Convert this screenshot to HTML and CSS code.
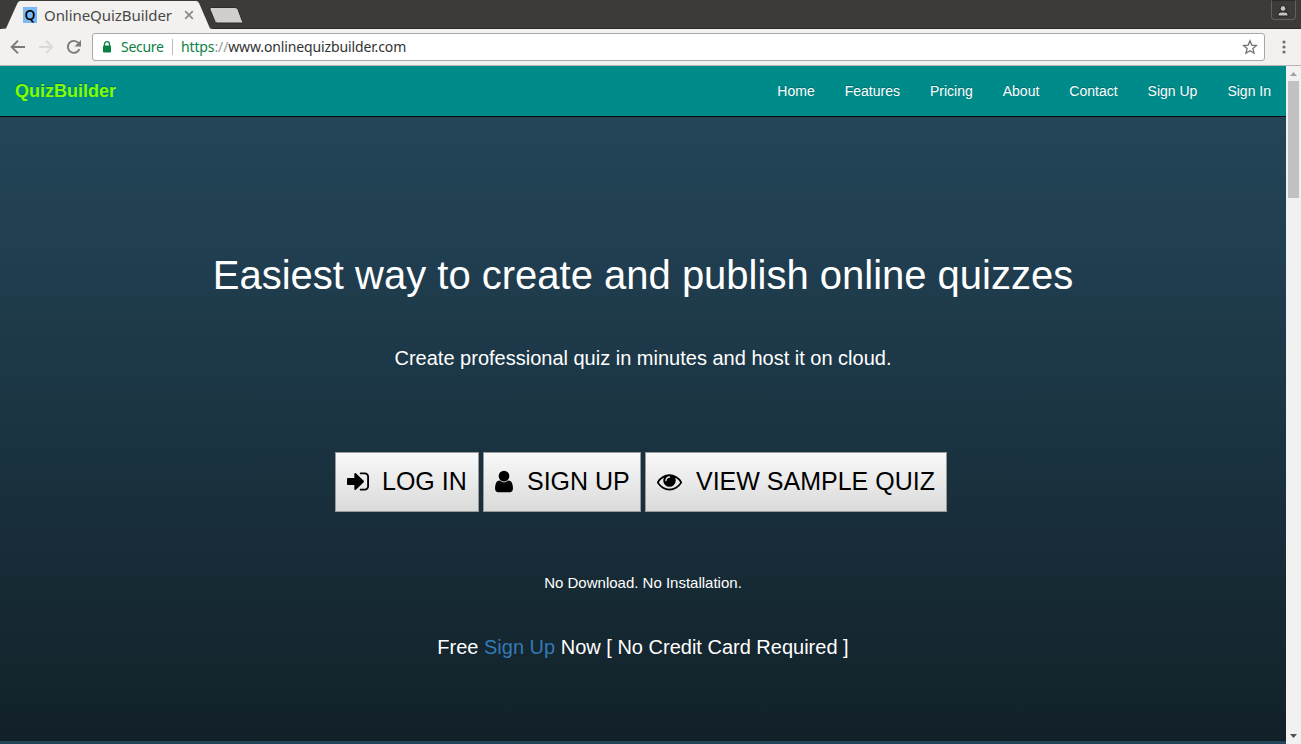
FILE: index.html
```html
<!DOCTYPE html>
<html lang="en">
<head>
    <meta charset="UTF-8">
    <meta name="viewport" content="width=device-width, initial-scale=1.0">
    <title>OnlineQuizBuilder</title>
    <link rel="stylesheet" href="styles.css">
</head>
<body>
    <div class="tab-strip">
        <svg class="tab-shapes" width="250" height="29" viewBox="0 0 250 29">
            <path d="M0 29L6 28.5 17.500 3Q18.500 1 20.500 1H196Q198 1 199 3L210 28.5 213 29z" fill="#f2f1f0"/>
            <path d="M211 7.500h24q2 0 3 2l4.500 12q.5 1.500-1 1.500h-24q-2 0-2.500-1.500l-5-12q-.5-2 1-2z" fill="#d0cfcd" stroke="#2b2a27"/>
        </svg>
        <div class="tab">
            <span class="favicon">Q</span>
            <span class="tab-title">OnlineQuizBuilder</span>
            <svg width="10" height="10" viewBox="0 0 10 10"><path d="M1.200 1.200l7.600 7.600M8.800 1.200L1.200 8.800" stroke="#8b8a88" stroke-width="1.700"/></svg>
        </div>
        <div class="profile">
            <svg width="12" height="12" viewBox="0 0 12 12" fill="#c4c3c0" stroke="#1d1c1a"><circle cx="6" cy="3.500" r="2.900"/><path d="M1 11V9.500q0-2.500 3-2.500h4q3 0 3 2.500V11z"/></svg>
        </div>
    </div>

    <div class="toolbar">
        <svg class="nav-icon" width="16" height="16" viewBox="0 0 16 16"><path d="M15 8H2.500M8 1.700L1.700 8 8 14.300" fill="none" stroke="#7c7a79" stroke-width="1.900"/></svg>
        <svg class="nav-icon" width="16" height="16" viewBox="0 0 16 16"><path d="M1 8h12.500M8 1.700L14.300 8 8 14.300" fill="none" stroke="#dad9d8" stroke-width="1.900"/></svg>
        <svg class="nav-icon" width="16" height="16" viewBox="0 0 16 16"><path d="M13.500 10A6 6 0 1 1 12.500 4" fill="none" stroke="#7c7a79" stroke-width="1.900"/><path d="M15 1v6.500H8.500z" fill="#7c7a79"/></svg>
        <div class="address">
            <svg class="lock" width="10" height="12" viewBox="0 0 10 12"><path d="M2.500 5V3.200a2.500 2.500 0 0 1 5 0V5" fill="none" stroke="#0b8043" stroke-width="1.300"/><rect x="1" y="4.500" width="8" height="7" rx=".8" fill="#0b8043"/></svg>
            <span class="secure">Secure</span>
            <span class="url"><span class="scheme">https</span><span class="slashes">://</span>www.onlinequizbuilder.com</span>
            <svg class="star" width="16" height="16" viewBox="0 0 16 16"><path d="M8 1.800l1.800 4.300 4.700.4-3.600 3.100 1.100 4.600-4-2.500-4 2.500 1.100-4.600L1.500 6.500l4.700-.4z" fill="none" stroke="#72706f" stroke-width="1.300"/></svg>
        </div>
        <svg class="menu-dots" width="4" height="14" viewBox="0 0 4 14" fill="#72706f"><circle cx="2" cy="2" r="1.600"/><circle cx="2" cy="7" r="1.600"/><circle cx="2" cy="12" r="1.600"/></svg>
    </div>

    <div class="viewport">
        <div class="page">
            <nav class="navbar">
                <a class="brand">QuizBuilder</a>
                <ul class="nav-links">
                    <li>Home</li>
                    <li>Features</li>
                    <li>Pricing</li>
                    <li>About</li>
                    <li>Contact</li>
                    <li>Sign Up</li>
                    <li>Sign In</li>
                </ul>
            </nav>

            <section class="hero">
                <h1>Easiest way to create and publish online quizzes</h1>
                <p class="lead">Create professional quiz in minutes and host it on cloud.</p>
                <div class="buttons">
                    <a class="btn btn-login">
                        <svg width="22" height="25" viewBox="128 0 1536 1792" preserveAspectRatio="none"><path d="M1312 896q0 26-19 45l-544 544q-19 19-45 19t-45-19-19-45v-288h-448q-26 0-45-19t-19-45v-384q0-26 19-45t45-19h448v-288q0-26 19-45t45-19 45 19l544 544q19 19 19 45zm352-352v704q0 119-84.500 203.500t-203.500 84.500h-320q-13 0-22.500-9.500t-9.500-22.500q0-4-1-20t-.5-26.500 3-23.500 10-19.500 20.500-6.500h320q66 0 113-47t47-113v-704q0-66-47-113t-113-47h-312l-11.500-1-11.500-3-8-5.500-7-9-2-13.500q0-4-1-20t-.5-26.500 3-23.500 10-19.500 20.500-6.500h320q119 0 203.500 84.500t84.500 203.500z"/></svg>
                        LOG IN
                    </a>
                    <a class="btn btn-signup">
                        <svg width="18" height="25" viewBox="256 0 1280 1792"><path d="M1536 1399q0 109-62.500 187t-150.500 78h-854q-88 0-150.500-78t-62.500-187q0-85 8.500-160.500t31.500-152 58.500-131 94-89 134.500-34.500q131 128 313 128t313-128q76 0 134.500 34.500t94 89 58.500 131 31.500 152 8.500 160.500zm-256-887q0 159-112.500 271.500t-271.500 112.500-271.500-112.500-112.500-271.500 112.500-271.500 271.500-112.500 271.500 112.500 112.500 271.500z"/></svg>
                        SIGN UP
                    </a>
                    <a class="btn btn-sample">
                        <svg width="25" height="25" viewBox="0 0 1792 1792"><path d="M1664 960q-152-236-381-353 61 104 61 225 0 185-131.500 316.500t-316.500 131.500-316.500-131.500-131.500-316.500q0-121 61-225-229 117-381 353 133 205 333.500 326.500t434.500 121.500 434.500-121.500 333.500-326.500zm-720-384q0-20-14-34t-34-14q-125 0-214.500 89.500t-89.500 214.500q0 20 14 34t34 14 34-14 14-34q0-86 61-147t147-61q20 0 34-14t14-34zm848 384q0 34-20 69-140 230-376.500 368.500t-499.500 138.500-499.500-139-376.500-368q-20-35-20-69t20-69q140-229 376.500-368t499.500-139 499.500 139 376.500 368q20 35 20 69z"/></svg>
                        VIEW SAMPLE QUIZ
                    </a>
                </div>
                <p class="note">No Download. No Installation.</p>
                <p class="signup">Free <a>Sign Up</a> Now [ No Credit Card Required ]</p>
            </section>
            <section class="next-section"></section>
        </div>
        <div class="scrollbar">
            <svg width="15" height="15" viewBox="0 0 15 15"><path d="M4 10l3.500-4 3.500 4z" fill="#a3a3a3"/></svg>
            <div class="thumb"></div>
            <svg width="15" height="15" viewBox="0 0 15 15"><path d="M4 5h7L7.500 9z" fill="#505050"/></svg>
        </div>
    </div>
</body>
</html>
```
FILE: styles.css
```css
* {
    box-sizing: border-box;
}

body {
    margin: 0;
    height: 744px;
    overflow: hidden;
    display: flex;
    flex-direction: column;
    font-family: "Liberation Sans", Arial, sans-serif;
}

svg {
    display: block;
    flex: none;
}

/* browser window */
.tab-strip {
    position: relative;
    height: 29px;
    flex: none;
    display: flex;
    justify-content: space-between;
    background: #3c3b37;
    border-bottom: 1px solid #2b2a27;
}

.tab-shapes {
    position: absolute;
    left: 0;
    top: 0;
}

.tab {
    position: relative;
    display: flex;
    align-items: center;
    height: 30px;
    padding-left: 23px;
}

.favicon {
    width: 14px;
    height: 16px;
    background: #78b8f5;
    color: #000;
    font: 600 14px/16px "Open Sans", sans-serif;
    text-align: center;
}

.tab-title {
    width: 147px;
    padding-left: 7px;
    font: 15px/20px "Noto Sans", sans-serif;
    letter-spacing: -0.06px;
    color: #4a4946;
    white-space: nowrap;
}

.profile {
    width: 25px;
    height: 20px;
    margin-right: 5px;
    padding: 4px 0 0 5px;
    border: 1px solid #62615d;
    border-top-color: #2b2a27;
    border-radius: 0 0 4px 4px;
}

.toolbar {
    height: 37px;
    flex: none;
    display: flex;
    align-items: center;
    padding: 0 15px 0 10px;
    background: #f2f1f0;
    border-bottom: 1px solid #b6b5b3;
}

.nav-icon {
    margin-right: 12px;
}

.address {
    flex: 1;
    height: 28px;
    margin-right: 17px;
    margin-left: -2px;
    display: flex;
    align-items: center;
    padding: 0 6px 0 9px;
    background: #fff;
    border: 1px solid #a9a8a7;
    border-radius: 3px;
    font: 14px/18px "Noto Sans", sans-serif;
    letter-spacing: -0.13px;
    color: #333;
}

.secure {
    width: 52px;
    height: 16px;
    margin-left: 9px;
    border-right: 1px solid #bbb;
    line-height: 15px;
    letter-spacing: -0.3px;
    color: #0b8043;
}

.url {
    margin-left: 8px;
}

.scheme {
    color: #0b8043;
}

.slashes {
    color: #999;
}

.star {
    margin-left: auto;
}

/* page */
.viewport {
    flex: 1;
    display: flex;
    min-height: 0;
}

.page {
    flex: 1;
    display: flex;
    flex-direction: column;
}

.navbar {
    height: 51px;
    flex: none;
    display: flex;
    justify-content: space-between;
    align-items: center;
    padding: 0 15px;
    background: #008b8b;
    border-bottom: 1px solid #080808;
}

.brand {
    font-size: 18px;
    font-weight: bold;
    color: #7fff00;
    text-shadow: 0 -1px 0 rgba(0, 0, 0, 0.25);
}

.nav-links {
    display: flex;
    gap: 30px;
    margin: 0;
    padding: 0;
    list-style: none;
    font-size: 14px;
    color: #fff;
    text-shadow: 0 -1px 0 rgba(0, 0, 0, 0.25);
}

.hero {
    height: 624px;
    padding-top: 136px;
    background: linear-gradient(#234557, #203f51 20%, #122128);
    color: #fff;
    text-align: center;
}

.hero h1 {
    margin: 0;
    font-size: 40px;
    font-weight: normal;
    line-height: 44px;
}

.lead {
    margin: 47px 0 0;
    font-size: 20px;
    line-height: 28px;
}

.buttons {
    display: flex;
    justify-content: center;
    gap: 4px;
    margin: 80px 4px 0 0;
}

.btn {
    height: 60px;
    display: flex;
    align-items: center;
    gap: 14px;
    padding: 0 0 2px 11px;
    border: 1px solid #999;
    background: linear-gradient(#f9f9f9, #dadada);
    color: #000;
    fill: #000;
    font-size: 25px;
    white-space: nowrap;
}

.btn-login {
    width: 144px;
    gap: 13px;
}

.btn-signup {
    width: 158px;
}

.btn-sample {
    width: 302px;
}

.note {
    margin: 60px 0 0;
    font-size: 15px;
    line-height: 22px;
}

.signup {
    margin: 39px 0 0;
    font-size: 20px;
    line-height: 28px;
}

.signup a {
    color: #337ab7;
}

.next-section {
    flex: 1;
    background: #234557;
}

.scrollbar {
    width: 15px;
    flex: none;
    display: flex;
    flex-direction: column;
    background: #f1f1f1;
}

.thumb {
    width: 11px;
    height: 117px;
    margin: 0 2px auto;
    background: #c1c1c1;
}
```
